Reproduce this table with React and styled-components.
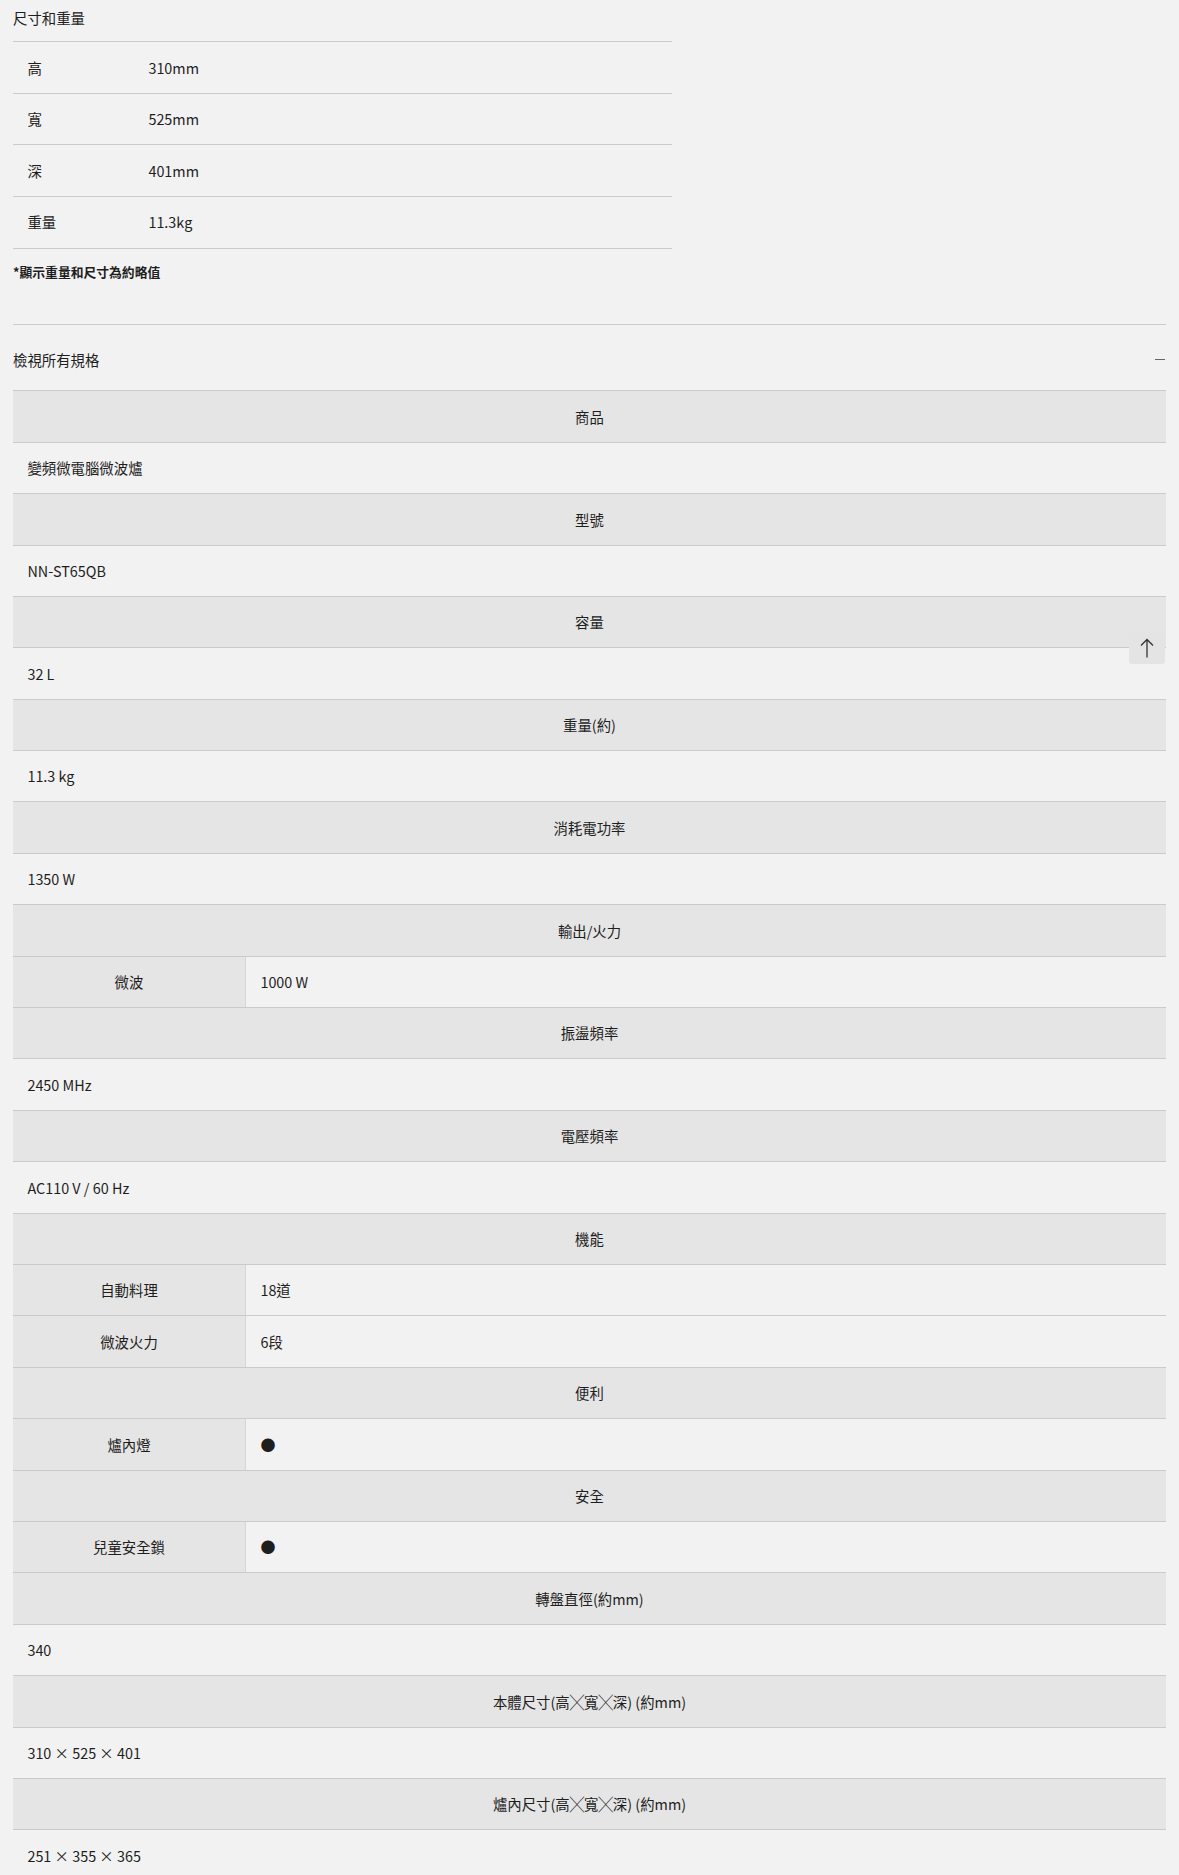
import styled, { createGlobalStyle } from "styled-components";

const GlobalStyle = createGlobalStyle`
    html, body {
        margin: 0;
        padding: 0;
        background: #f2f2f2;
    }

    body {
        font-family: "Noto Sans CJK TC", "Noto Sans", sans-serif;
        font-size: 14.4px;
        line-height: 1.5;
        color: #1e1e1e;
    }
`;

const dimensions = [
    ["高", "310mm"],
    ["寬", "525mm"],
    ["深", "401mm"],
    ["重量", "11.3kg"],
];

const specs = [
    { head: "商品" }, { value: "變頻微電腦微波爐" },
    { head: "型號" }, { value: "NN-ST65QB" },
    { head: "容量" }, { value: "32 L" },
    { head: "重量(約)" }, { value: "11.3 kg" },
    { head: "消耗電功率" }, { value: "1350 W" },
    { head: "輸出/火力" }, { label: "微波", value: "1000 W" },
    { head: "振盪頻率" }, { value: "2450 MHz" },
    { head: "電壓頻率" }, { value: "AC110 V / 60 Hz" },
    { head: "機能" }, { label: "自動料理", value: "18道" }, { label: "微波火力", value: "6段" },
    { head: "便利" }, { label: "爐內燈", value: "●", dot: true },
    { head: "安全" }, { label: "兒童安全鎖", value: "●", dot: true },
    { head: "轉盤直徑(約mm)" }, { value: "340" },
    { head: "本體尺寸(高╳寬╳深) (約mm)" }, { value: "310 × 525 × 401" },
    { head: "爐內尺寸(高╳寬╳深) (約mm)" }, { value: "251 × 355 × 365" },
];

export default function App() {
    return (
        <>
            <GlobalStyle />
            <Page>
                <Title>尺寸和重量</Title>
                <DimTable>
                    {dimensions.map(([label, value]) => (
                        <DimRow key={label}>
                            <DimLabel>{label}</DimLabel>
                            <DimValue>{value}</DimValue>
                        </DimRow>
                    ))}
                </DimTable>
                <Note>*顯示重量和尺寸為約略值</Note>

                <Accordion>
                    <AccordionHead>
                        <span>檢視所有規格</span>
                        <Minus />
                    </AccordionHead>
                    <SpecTable>
                        {specs.map((row, i) => {
                            if (row.head) return <SpecHeader key={i}>{row.head}</SpecHeader>;
                            if (row.label) {
                                return (
                                    <SpecPair key={i}>
                                        <PairLabel>{row.label}</PairLabel>
                                        <PairValue $dot={row.dot}>{row.value}</PairValue>
                                    </SpecPair>
                                );
                            }
                            return <SpecValue key={i}>{row.value}</SpecValue>;
                        })}
                    </SpecTable>
                </Accordion>
            </Page>

            <BackToTop aria-label="回到頂端">
                <svg width="14" height="20" viewBox="0 0 14 20" fill="none" stroke="#333" strokeWidth="1.3">
                    <path d="M7 1.5 V19.5 M1 7.5 L7 1.5 L13 7.5" />
                </svg>
            </BackToTop>
        </>
    );
}

const Page = styled.div`
    padding: 7px 13px 0;
`;

const Title = styled.div`
    font-size: 14.4px;
    margin-bottom: 12.5px;
`;

const DimTable = styled.div`
    width: 659px;
    border-bottom: 1px solid #cbcbcb;
`;

const DimRow = styled.div`
    display: flex;
    border-top: 1px solid #cbcbcb;
`;

const DimLabel = styled.div`
    width: 121px;
    box-sizing: border-box;
    padding: 14.5px 14.4px;
`;

const DimValue = styled.div`
    flex: 1;
    padding: 14.5px 14.4px;
`;

const Note = styled.div`
    font-size: 12.8px;
    font-weight: 700;
    margin-top: 13px;
`;

const Accordion = styled.div`
    margin-top: 43px;
    border-top: 1px solid #cbcbcb;
`;

const AccordionHead = styled.div`
    display: flex;
    justify-content: space-between;
    align-items: center;
    padding: 24px 1px 20px 0;
`;

const Minus = styled.span`
    display: block;
    width: 10px;
    height: 1.5px;
    background: #666;
`;

const SpecTable = styled.div`
    border-bottom: 1px solid #cbcbcb;
`;

const SpecHeader = styled.div`
    border-top: 1px solid #cbcbcb;
    background: #e5e5e5;
    text-align: center;
    padding: 14.4px;
`;

const SpecValue = styled.div`
    border-top: 1px solid #cbcbcb;
    padding: 14.4px;
`;

const SpecPair = styled.div`
    display: flex;
    border-top: 1px solid #cbcbcb;
`;

const PairLabel = styled.div`
    width: 233px;
    flex-shrink: 0;
    box-sizing: border-box;
    background: #e5e5e5;
    border-right: 1px solid #d6d6d6;
    text-align: center;
    padding: 14.4px;
`;

const PairValue = styled.div`
    flex: 1;
    padding: 14.4px;
    font-size: ${(p) => (p.$dot ? "15px" : "14.4px")};
    line-height: ${(p) => (p.$dot ? "21.6px" : "1.5")};
`;

const BackToTop = styled.button`
    position: absolute;
    top: 632px;
    left: 1129px;
    width: 36px;
    height: 32px;
    padding: 0;
    border: none;
    border-radius: 3px;
    background: #e4e4e4;
    display: flex;
    align-items: center;
    justify-content: center;
    cursor: pointer;
`;
